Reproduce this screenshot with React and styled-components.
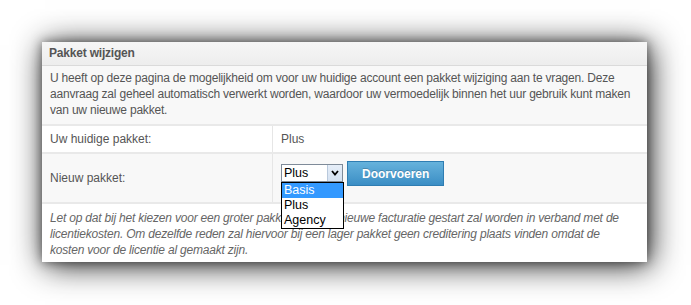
import React from 'react';
import styled, { createGlobalStyle } from 'styled-components';

const GlobalStyle = createGlobalStyle`
  html, body {
    margin: 0;
    padding: 0;
    background: #ffffff;
  }
  body {
    font-family: "Liberation Sans", Arial, sans-serif;
    font-size: 12px;
    color: #555;
  }
`;

const Page = styled.div`
  padding: 42px 0 0 42px;
  width: 691px;
  height: 305px;
  box-sizing: border-box;
  overflow: hidden;
`;

const Panel = styled.div`
  width: 605px;
  background: #fff;
  box-shadow: 3px 3px 30px rgba(0, 0, 0, 0.9), 0 0 10px rgba(0, 0, 0, 0.45);
`;

const Header = styled.div`
  height: 23px;
  line-height: 23px;
  padding: 0 7px;
  font-weight: bold;
  font-size: 12px;
  letter-spacing: -0.2px;
  color: #555;
  background: linear-gradient(#f6f6f6, #ededed);
  border-bottom: 1px solid #dadada;
`;

const Intro = styled.p`
  margin: 0;
  padding: 4px 7px 6px 8px;
  line-height: 16px;
  letter-spacing: -0.2px;
  white-space: nowrap;
  background: #f8f8f8;
  border-bottom: 2px solid #e9e9e9;
`;

const Row = styled.div`
  display: grid;
  grid-template-columns: 231px 1fr;
  min-height: ${(p) => p.$height}px;
  background: ${(p) => (p.$shaded ? '#f8f8f8' : '#fff')};
  border-bottom: 2px solid #e9e9e9;
`;

const Label = styled.div`
  display: flex;
  align-items: center;
  padding: 0 8px;
  border-right: 1px solid #e6e6e6;
`;

const Value = styled.div`
  display: flex;
  align-items: ${(p) => (p.$top ? 'flex-start' : 'center')};
  gap: 4px;
  padding: ${(p) => (p.$top ? '7px 8px 0' : '0 8px')};
`;

const SelectWrap = styled.div`
  position: relative;
  margin-top: 3px;
`;

const SelectBox = styled.div`
  display: flex;
  width: 62px;
  height: 18px;
  box-sizing: border-box;
  border: 1px solid #7f8b99;
  background: #fff;
  color: #000;
  font-size: 12.5px;
`;

const SelectText = styled.span`
  flex: 1;
  line-height: 16px;
  padding-left: 2px;
`;

const Arrow = styled.span`
  width: 14px;
  display: flex;
  align-items: center;
  justify-content: center;
  background: linear-gradient(#e6eef8, #d5e2f2);
  border-left: 1px solid #b9c9dc;
`;

const List = styled.ul`
  position: absolute;
  top: 18px;
  left: 0;
  width: 63px;
  margin: 0;
  padding: 0;
  list-style: none;
  background: #fff;
  border: 1px solid #000;
  box-sizing: border-box;
  z-index: 2;
`;

const Option = styled.li`
  height: 15px;
  line-height: 15px;
  padding-left: 2px;
  font-size: 12.5px;
  color: ${(p) => (p.$active ? '#fff' : '#000')};
  background: ${(p) => (p.$active ? '#3399ff' : '#fff')};
`;

const Button = styled.button`
  height: 25px;
  padding: 0 14px;
  font-family: "Liberation Sans", Arial, sans-serif;
  font-size: 12px;
  font-weight: bold;
  color: #fff;
  text-shadow: 0 -1px 0 rgba(0, 0, 0, 0.2);
  background: linear-gradient(#66b2dc, #3b8ec5);
  border: 1px solid #2f7db2;
  border-radius: 0;
  cursor: pointer;
`;

const Note = styled.p`
  margin: 0;
  padding: 6px 8px 4px;
  line-height: 16px;
  letter-spacing: -0.2px;
  white-space: nowrap;
  font-style: italic;
  color: #666;
`;

const options = ['Basis', 'Plus', 'Agency'];

export default function App() {
  return (
    <>
      <GlobalStyle />
      <Page>
        <Panel>
          <Header>Pakket wijzigen</Header>
          <Intro>
            U heeft op deze pagina de mogelijkheid om voor uw huidige account een pakket wijziging aan te vragen. Deze
            <br />
            aanvraag zal geheel automatisch verwerkt worden, waardoor uw vermoedelijk binnen het uur gebruik kunt maken
            <br />
            van uw nieuwe pakket.
          </Intro>
          <Row $height={26}>
            <Label>Uw huidige pakket:</Label>
            <Value>Plus</Value>
          </Row>
          <Row $height={48} $shaded>
            <Label>Nieuw pakket:</Label>
            <Value $top>
              <SelectWrap>
                <SelectBox>
                  <SelectText>Plus</SelectText>
                  <Arrow>
                    <svg width="8" height="6" viewBox="0 0 8 6">
                      <polyline points="1,1 4,4.5 7,1" fill="none" stroke="#000" strokeWidth="1.8" />
                    </svg>
                  </Arrow>
                </SelectBox>
                <List>
                  {options.map((o) => (
                    <Option key={o} $active={o === 'Basis'}>{o}</Option>
                  ))}
                </List>
              </SelectWrap>
              <Button>Doorvoeren</Button>
            </Value>
          </Row>
          <Note>
            Let op dat bij het kiezen voor een groter pakket ook een nieuwe facturatie gestart zal worden in verband met de
            <br />
            licentiekosten. Om dezelfde reden zal hiervoor bij een lager pakket geen creditering plaats vinden omdat de
            <br />
            kosten voor de licentie al gemaakt zijn.
          </Note>
        </Panel>
      </Page>
    </>
  );
}
